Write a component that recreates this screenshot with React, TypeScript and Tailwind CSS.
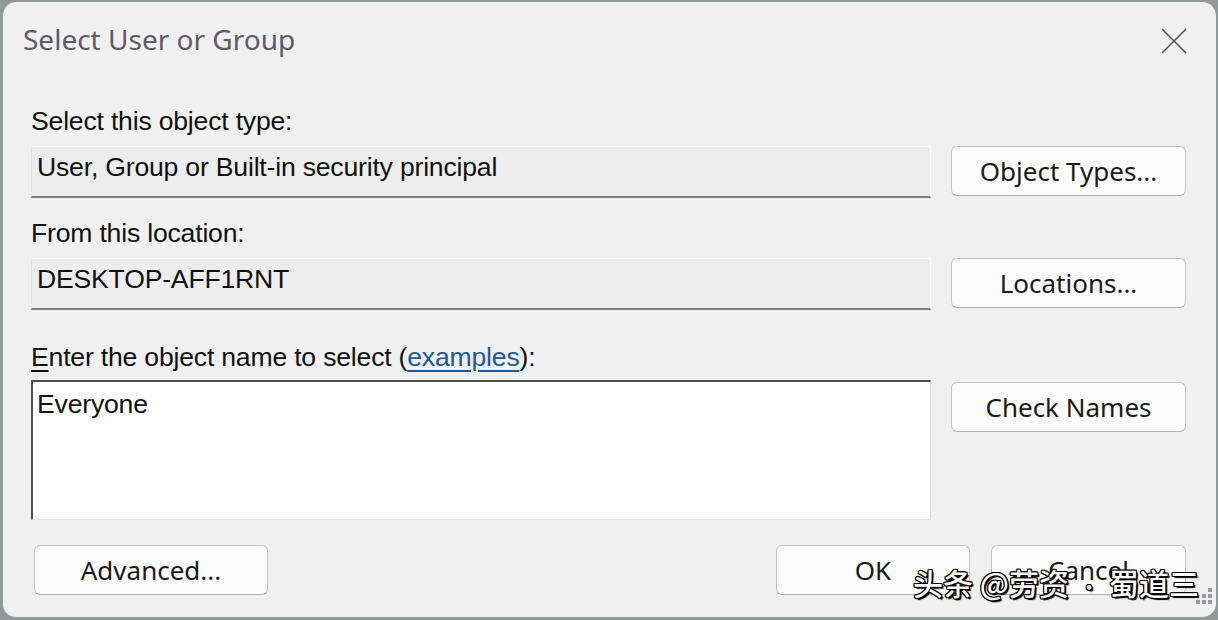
import React from "react";

const label = "font-['Liberation_Sans',Arial,sans-serif] text-[26.6px] leading-[30px] text-[#111] tracking-[-0.2px]";
const btn =
  "h-[50px] rounded-[6px] border border-[#c3c3c3] border-b-[#b0b0b0] bg-[#fbfbfb] font-['Noto_Sans',sans-serif] text-[26px] leading-none text-[#1a1a1a] flex items-center justify-center";
const field =
  "h-[52px] bg-[#ededed] border-t border-t-[#fafafa] border-r border-r-[#fafafa] border-l border-l-[#e4e4e4] border-b-2 border-b-[#7c7c7c] pl-[5px] pt-[5px] font-['Liberation_Sans',Arial,sans-serif] text-[26.6px] leading-[30px] text-[#111] tracking-[-0.2px]";

export default function App() {
  return (
    <div className="w-[1218px] h-[620px] bg-[#8e9a99] p-[2px] overflow-hidden">
      <div className="relative w-[1214px] h-[616px] rounded-[14px] bg-[#f0f0f1] border-l border-b border-[#9a9a9a] flex flex-col">
        {/* Title bar */}
        <div className="flex items-start justify-between pl-[20px] pr-[29px] pt-[18px]">
          <div className="font-['Noto_Sans',sans-serif] text-[28px] leading-[38px] text-[#5e5a68]">
            Select User or Group
          </div>
          <svg width="26" height="26" viewBox="0 0 26 26" className="mt-[8px]">
            <line x1="1" y1="1" x2="25" y2="25" stroke="#555" strokeWidth="1.6" />
            <line x1="25" y1="1" x2="1" y2="25" stroke="#555" strokeWidth="1.6" />
          </svg>
        </div>

        {/* Body */}
        <div className="pl-[28px] pr-[30px] mt-[48px] grid grid-cols-[900px_235px] gap-x-[20px]">
          <div className={label}>Select this object type:</div>
          <div />
          <div className={`${field} mt-[10px]`}>User, Group or Built-in security principal</div>
          <div className={`${btn} mt-[10px]`}>Object Types...</div>

          <div className={`${label} mt-[20px]`}>From this location:</div>
          <div />
          <div className={`${field} mt-[10px]`}>DESKTOP-AFF1RNT</div>
          <div className={`${btn} mt-[10px]`}>Locations...</div>

          <div className={`${label} mt-[32px]`}>
            <span className="underline underline-offset-[4px] decoration-[1.5px]">E</span>nter the object name to select (
            <span className="text-[#1d5a97] underline underline-offset-[4px] decoration-[1.5px]">examples</span>):
          </div>
          <div />
          <div className="mt-[8px] h-[140px] bg-white border-t-2 border-l-2 border-t-[#4f4f4f] border-l-[#4f4f4f] border-r border-b border-r-[#dcdcdc] border-b-[#e6e6e6] pl-[4px] pt-[7px] font-['Liberation_Sans',Arial,sans-serif] text-[26.6px] leading-[30px] text-[#111] tracking-[-0.2px]">
            Everyone
          </div>
          <div className={`${btn} mt-[10px]`}>Check Names</div>
        </div>

        {/* Bottom buttons */}
        <div className="mt-[25px] pl-[31px] pr-[30px] flex items-center">
          <div className={`${btn} w-[234px] h-[49px]`}>Advanced...</div>
          <div className="flex-1" />
          <div className={`${btn} w-[194px] h-[49px]`}>OK</div>
          <div className={`${btn} w-[195px] h-[49px] ml-[21px]`}>Cancel</div>
        </div>

        {/* Watermark overlay */}
        <div
          className="absolute left-[910px] top-[559px] font-['Noto_Sans_CJK_SC','Noto_Sans',sans-serif] font-medium text-[30px] leading-[42px] text-white whitespace-nowrap"
          style={{
            textShadow:
              "1px 1px 0 #000, -1px -1px 0 #000, 1px -1px 0 #000, -1px 1px 0 #000, 0 1px 0 #000, 1px 0 0 #000, 0 -1px 0 #000, -1px 0 0 #000, 2px 2px 1px #000",
          }}
        >
          头条 @劳资<span className="inline-block mx-[10px] text-[20px] align-middle">·</span>蜀道三
        </div>
        <div className="absolute left-[1193px] top-[586px] grid grid-cols-3 gap-[2px]">
          {Array.from({ length: 9 }).map((_, i) => (
            <div
              key={i}
              className={`w-[4px] h-[4px] ${i === 0 || i === 1 || i === 3 ? "bg-transparent" : "bg-[#9a9aa0]"}`}
            />
          ))}
        </div>
      </div>
    </div>
  );
}
